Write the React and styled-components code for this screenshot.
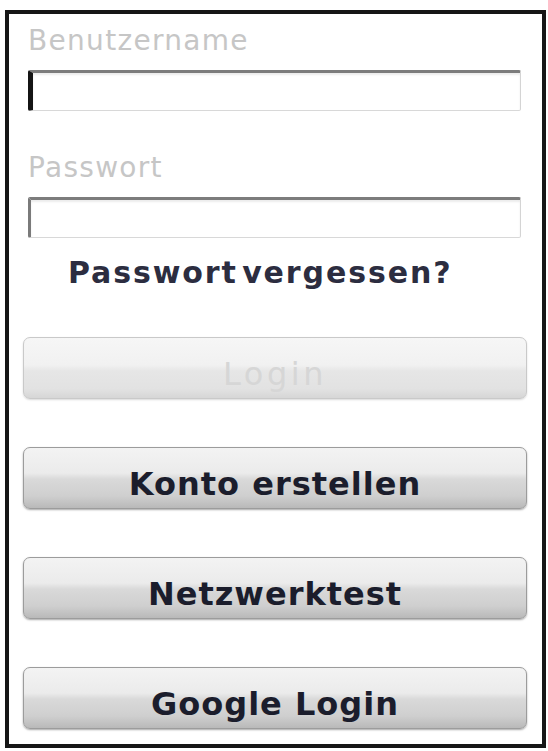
import React from 'react';
import styled, { createGlobalStyle } from 'styled-components';

const GlobalStyle = createGlobalStyle`
  html, body {
    margin: 0;
    padding: 0;
    background: #ffffff;
  }
  body {
    font-family: "DejaVu Sans", Verdana, sans-serif;
  }
`;

const Frame = styled.div`
  box-sizing: border-box;
  width: 541px;
  height: 738px;
  margin: 10px 0 0 5px;
  border: 4px solid #161616;
  background: #ffffff;
  display: flex;
  flex-direction: column;
  padding: 10px 15px 0 14px;
`;

const Field = styled.div`
  display: flex;
  flex-direction: column;
  gap: 12px;
  padding: 0 6px 0 5px;
  margin-bottom: ${(p) => p.$spacing || 0}px;
`;

const Label = styled.label`
  font-size: 28px;
  line-height: 34px;
  color: #c6c6c6;
  letter-spacing: 1.3px;
`;

const Input = styled.div`
  box-sizing: border-box;
  height: 41px;
  background: #ffffff;
  border-top: 3px solid #7c7c7c;
  border-left: ${(p) => (p.$focused ? '5px solid #141414' : '3px solid #7a7a7a')};
  border-right: 1px solid #d4d4d4;
  border-bottom: 1px solid #d8d8d8;
  border-radius: 2px;
  box-shadow: inset 0 2px 2px rgba(0, 0, 0, 0.08);
`;

const Forgot = styled.a`
  display: block;
  margin: 17px 0 0 45px;
  font-size: 30px;
  line-height: 36px;
  font-weight: bold;
  letter-spacing: 1.9px;
  word-spacing: -8px;
  color: #2c2d40;
  text-decoration: none;
`;

const Buttons = styled.div`
  display: flex;
  flex-direction: column;
  gap: 48px;
  margin-top: 46px;
`;

const Button = styled.button`
  box-sizing: border-box;
  height: 62px;
  width: 100%;
  padding: 12px 0 0;
  border-radius: 7px;
  border: 1px solid ${(p) => (p.disabled ? '#c9c9c9' : '#9c9c9c')};
  background: ${(p) =>
    p.disabled
      ? 'linear-gradient(to bottom, #f6f6f6 0%, #f1f1f1 45%, #e6e6e6 55%, #e2e2e2 85%, #d6d6d6 100%)'
      : 'linear-gradient(to bottom, #f3f3f3 0%, #ebebeb 42%, #d9d9d9 52%, #cfcfcf 80%, #b9b9b9 100%)'};
  box-shadow: 0 1px 2px rgba(0, 0, 0, ${(p) => (p.disabled ? 0.15 : 0.35)});
  font-family: "DejaVu Sans", Verdana, sans-serif;
  font-size: 32px;
  line-height: 36px;
  font-weight: bold;
  letter-spacing: 1px;
  color: ${(p) => (p.disabled ? '#d6d6d6' : '#1b1d2c')};
  cursor: ${(p) => (p.disabled ? 'default' : 'pointer')};
`;

const LoginLabel = styled.span`
  font-weight: normal;
  letter-spacing: 3.5px;
`;

export default function App() {
  return (
    <>
      <GlobalStyle />
      <Frame>
        <Field $spacing={40}>
          <Label>Benutzername</Label>
          <Input $focused />
        </Field>
        <Field>
          <Label>Passwort</Label>
          <Input />
        </Field>
        <Forgot href="#">Passwort vergessen?</Forgot>
        <Buttons>
          <Button disabled>
            <LoginLabel>Login</LoginLabel>
          </Button>
          <Button>Konto erstellen</Button>
          <Button>Netzwerktest</Button>
          <Button>Google Login</Button>
        </Buttons>
      </Frame>
    </>
  );
}
